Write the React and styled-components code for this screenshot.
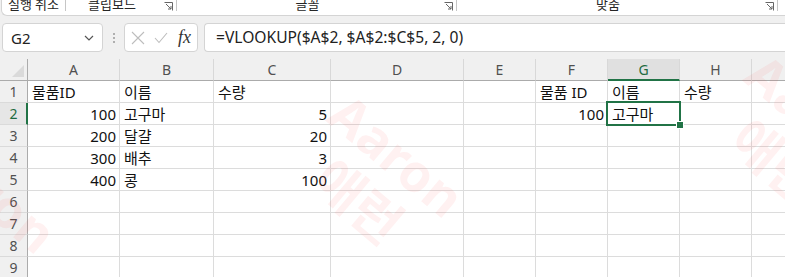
import React from "react";
import styled, { createGlobalStyle } from "styled-components";

const GlobalStyle = createGlobalStyle`
  body {
    margin: 0;
    background: #f0f0f0;
    overflow: hidden;
    font-family: "Noto Sans", "Noto Sans CJK KR", sans-serif;
  }
`;

const Page = styled.div`
  position: relative;
  width: 785px;
  height: 277px;
  overflow: hidden;
`;

const Ribbon = styled.div`
  display: flex;
  height: 15px;
  margin-left: 1px;
  background: #fff;
  border-bottom: 1px solid #d4d4d4;
  border-left: 1px solid #d4d4d4;
  border-bottom-left-radius: 6px;
  overflow: hidden;
`;

const RibbonGroup = styled.div`
  position: relative;
  display: flex;
  flex: 0 0 ${p => p.$w}px;
  border-right: 1px solid #c6c6c6;
  height: 11px;
  box-sizing: border-box;
`;

const GroupLabel = styled.div`
  flex: 1;
  text-align: center;
  font-family: "Noto Sans CJK KR", sans-serif;
  font-size: 13px;
  line-height: 13px;
  margin-top: -3px;
  color: #262626;
  padding-right: ${p => (p.$launcher ? 18 : 0)}px;
`;

const Launcher = styled.svg`
  position: absolute;
  right: 3px;
  top: 2px;
`;

const FormulaRow = styled.div`
  display: flex;
  align-items: center;
  height: 29px;
  margin: 7px 0 7px 2px;
`;

const NameBox = styled.div`
  display: flex;
  align-items: center;
  justify-content: space-between;
  width: 101px;
  height: 29px;
  box-sizing: border-box;
  padding: 0 8px 0 8px;
  background: #fff;
  border: 1px solid #d4d4d4;
  border-radius: 4px;
  font-size: 15px;
  color: #222;
`;

const Dots = styled.div`
  display: flex;
  flex-direction: column;
  gap: 2px;
  margin: 0 9px 0 10px;
  span {
    width: 2px;
    height: 2px;
    background: #9a9a9a;
    border-radius: 1px;
  }
`;

const FuncBox = styled.div`
  display: flex;
  align-items: center;
  width: 74px;
  height: 29px;
  box-sizing: border-box;
  padding: 0 5px 0 6px;
  gap: 9px;
  background: #fff;
  border: 1px solid #d4d4d4;
  border-radius: 4px;
`;

const Fx = styled.span`
  font-family: "Liberation Serif", serif;
  font-style: italic;
  font-size: 18px;
  color: #333;
  margin-left: 1px;
`;

const FormulaInput = styled.div`
  flex: 1;
  height: 29px;
  box-sizing: border-box;
  margin-left: 6px;
  padding-left: 11px;
  background: #fff;
  border: 1px solid #d4d4d4;
  border-right: none;
  border-radius: 4px 0 0 4px;
  font-size: 15.6px;
  line-height: 27px;
  color: #222;
  white-space: nowrap;
`;

const Grid = styled.div`
  display: grid;
  grid-template-columns: 28px 92px 94px 117px 133px 72px 72px 72px 72px 72px;
  grid-auto-rows: 22px;
  background: #fff;
`;

const Corner = styled.div`
  position: relative;
  background: #f0f0f0;
  border-right: 1px solid #ababab;
  border-bottom: 1px solid #ababab;
  &::after {
    content: "";
    position: absolute;
    right: 3px;
    bottom: 3px;
    border-left: 12px solid transparent;
    border-bottom: 12px solid #dadada;
  }
`;

const ColHead = styled.div`
  display: flex;
  align-items: center;
  justify-content: center;
  background: ${p => (p.$active ? "#e0e0e0" : "#f0f0f0")};
  color: ${p => (p.$active ? "#1e6b41" : "#505050")};
  border-right: 1px solid #d8d8d8;
  border-bottom: ${p => (p.$active ? "2px solid #217346" : "1px solid #ababab")};
  font-size: 14px;
  box-sizing: border-box;
`;

const RowHead = styled.div`
  display: flex;
  align-items: center;
  justify-content: center;
  background: ${p => (p.$active ? "#e6e6e6" : "#f0f0f0")};
  color: ${p => (p.$active ? "#1e6b41" : "#505050")};
  border-right: ${p => (p.$active ? "2px solid #217346" : "1px solid #ababab")};
  border-bottom: 1px solid #dadada;
  font-size: 14px;
  box-sizing: border-box;
  padding-left: ${p => (p.$active ? 1 : 0)}px;
`;

const Cell = styled.div`
  position: relative;
  display: flex;
  align-items: center;
  justify-content: ${p => (p.$num ? "flex-end" : "flex-start")};
  padding: 0 3px 0 4px;
  border-right: 1px solid #dcdcdc;
  border-bottom: 1px solid #dcdcdc;
  font-size: 15px;
  color: #111;
  white-space: nowrap;
  ${p =>
    p.$selected &&
    `
    &::after {
      content: "";
      position: absolute;
      left: -2px;
      top: -2px;
      right: -2px;
      bottom: -2px;
      border: 2px solid #217346;
      z-index: 2;
    }
    &::before {
      content: "";
      position: absolute;
      right: -5px;
      bottom: -5px;
      width: 6px;
      height: 6px;
      background: #217346;
      border: 1px solid #fff;
      z-index: 3;
    }
  `}
`;

const Watermark = styled.div`
  position: absolute;
  left: ${p => p.$x}px;
  top: ${p => p.$y}px;
  display: flex;
  flex-direction: column;
  align-items: center;
  transform: translate(-50%, -50%) rotate(40deg);
  font-family: "Noto Sans", "Noto Sans CJK KR", sans-serif;
  font-weight: 700;
  font-size: 52px;
  line-height: 60px;
  color: rgba(255, 40, 40, 0.065);
  pointer-events: none;
  z-index: 5;
  white-space: nowrap;
`;

const groups = [
  { label: "실행 취소", w: 64 },
  { label: "클립보드", w: 111, launcher: true },
  { label: "글꼴", w: 280, launcher: true },
  { label: "맞춤", w: 321, launcher: true },
  { label: "", w: 40 }
];

const cols = ["A", "B", "C", "D", "E", "F", "G", "H", "I"];

const rows = [
  ["물품ID", "이름", "수량", "", "", "물품 ID", "이름", "수량", ""],
  [100, "고구마", 5, "", "", 100, "고구마", "", ""],
  [200, "달걀", 20],
  [300, "배추", 3],
  [400, "콩", 100],
  [],
  [],
  [],
  []
];

const LauncherIcon = () => (
  <Launcher width="9" height="9" viewBox="0 0 9 9">
    <path d="M0.5 0.5 H8.5 V8.5" fill="none" stroke="#666" strokeWidth="1" />
    <path d="M2 2 L7 7 M7 4 V7 H4" fill="none" stroke="#666" strokeWidth="1" />
  </Launcher>
);

const App = () => (
  <Page>
    <GlobalStyle />
    <Ribbon>
      {groups.map((g, i) => (
        <RibbonGroup key={i} $w={g.w}>
          <GroupLabel $launcher={g.launcher}>{g.label}</GroupLabel>
          {g.launcher && <LauncherIcon />}
        </RibbonGroup>
      ))}
    </Ribbon>

    <FormulaRow>
      <NameBox>
        G2
        <svg width="10" height="6" viewBox="0 0 10 6">
          <path d="M1 1 L5 5 L9 1" fill="none" stroke="#555" strokeWidth="1.2" />
        </svg>
      </NameBox>
      <Dots>
        <span />
        <span />
        <span />
      </Dots>
      <FuncBox>
        <svg width="14" height="14" viewBox="0 0 14 14">
          <path d="M1 1 L13 13 M13 1 L1 13" stroke="#bdbdbd" strokeWidth="1.1" />
        </svg>
        <svg width="14" height="12" viewBox="0 0 14 12">
          <path d="M1 6 L5 10.5 L13 1" fill="none" stroke="#bdbdbd" strokeWidth="1.1" />
        </svg>
        <Fx>fx</Fx>
      </FuncBox>
      <FormulaInput>=VLOOKUP($A$2, $A$2:$C$5, 2, 0)</FormulaInput>
    </FormulaRow>

    <Grid>
      <Corner />
      {cols.map(c => (
        <ColHead key={c} $active={c === "G"}>
          {c}
        </ColHead>
      ))}
      {rows.map((r, ri) => (
        <React.Fragment key={ri}>
          <RowHead $active={ri === 1}>{ri + 1}</RowHead>
          {cols.map((c, ci) => {
            const v = r[ci];
            return (
              <Cell
                key={c}
                $num={typeof v === "number"}
                $selected={ri === 1 && c === "G"}
              >
                {v}
              </Cell>
            );
          })}
        </React.Fragment>
      ))}
    </Grid>

    <Watermark $x={378} $y={178}>
      <span>Aaron</span>
      <span>애런</span>
    </Watermark>
    <Watermark $x={795} $y={138}>
      <span>Aaron</span>
      <span>애런</span>
    </Watermark>
    <Watermark $x={-30} $y={214}>
      <span>Aaron</span>
      <span>애런</span>
    </Watermark>
  </Page>
);

export default App;
